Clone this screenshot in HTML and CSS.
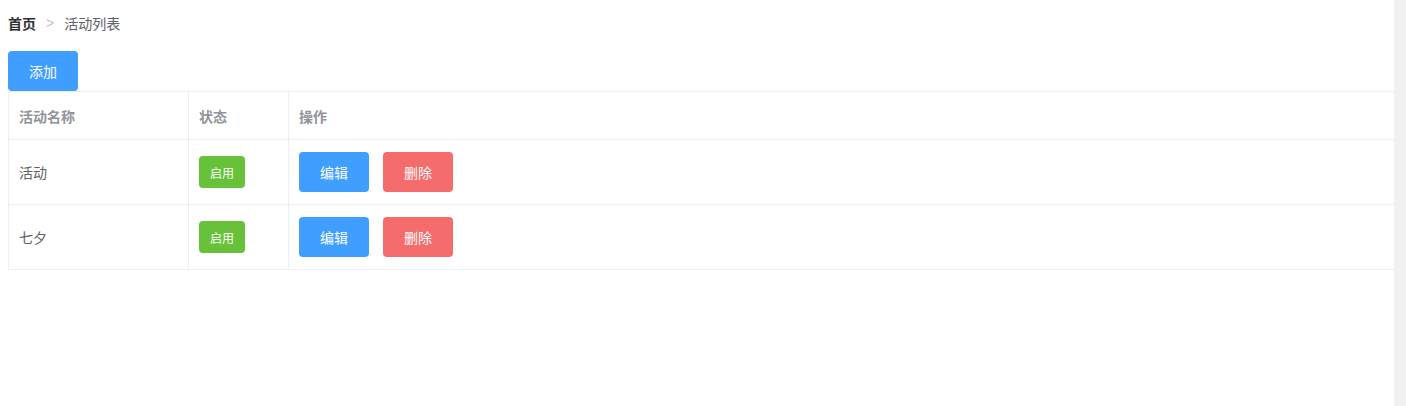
FILE: index.html
```html
<!DOCTYPE html>
<html lang="zh-CN">
<head>
<meta charset="utf-8">
<title>活动列表</title>
<link rel="stylesheet" href="styles.css">
</head>
<body>
<div class="page">
  <main class="main">
    <nav class="breadcrumb">
      <span class="crumb crumb-home">首页</span>
      <span class="crumb-sep">&gt;</span>
      <span class="crumb">活动列表</span>
    </nav>
    <div class="toolbar">
      <button class="btn btn-primary">添加</button>
    </div>
    <table class="table">
      <colgroup>
        <col class="col-name">
        <col class="col-status">
        <col>
      </colgroup>
      <thead>
        <tr>
          <th>活动名称</th>
          <th>状态</th>
          <th>操作</th>
        </tr>
      </thead>
      <tbody>
        <tr>
          <td>活动</td>
          <td><span class="tag">启用</span></td>
          <td><div class="actions"><button class="btn btn-primary">编辑</button><button class="btn btn-danger">删除</button></div></td>
        </tr>
        <tr>
          <td>七夕</td>
          <td><span class="tag">启用</span></td>
          <td><div class="actions"><button class="btn btn-primary">编辑</button><button class="btn btn-danger">删除</button></div></td>
        </tr>
      </tbody>
    </table>
  </main>
  <div class="scrollbar"></div>
</div>
</body>
</html>
```

FILE: styles.css
```css
* { box-sizing: border-box; }
html, body { margin: 0; padding: 0; background: #fff; }
body {
  font-family: "Noto Sans CJK SC", "Noto Sans", sans-serif;
  font-size: 14px;
  color: #606266;
}
.page {
  display: flex;
  height: 406px;
  overflow: hidden;
}
.main {
  flex: 1;
  min-width: 0;
  padding: 16px 0 0 8px;
}
.scrollbar {
  width: 12px;
  flex: none;
  background: #f1f1f1;
}
.breadcrumb {
  display: flex;
  align-items: center;
  height: 14px;
  line-height: 14px;
  font-size: 14px;
}
.crumb { color: #606266; }
.crumb-home { color: #303133; font-weight: 700; }
.crumb-sep {
  color: #c0c4cc;
  margin: 0 10px 0 10px;
  font-family: "Liberation Sans", sans-serif;
}
.toolbar {
  margin-top: 21px;
  display: flex;
}
.btn {
  display: inline-flex;
  align-items: center;
  justify-content: center;
  width: 70px;
  height: 40px;
  border: none;
  border-radius: 4px;
  font-family: inherit;
  font-size: 14px;
  color: #fff;
  padding: 0 0 1px;
  cursor: pointer;
}
.btn-primary { background: #409eff; }
.btn-danger { background: #f56c6c; }
.table {
  width: 100%;
  border-collapse: collapse;
  table-layout: fixed;
  border-top: 1px solid #ebeef5;
}
.col-name { width: 180px; }
.col-status { width: 100px; }
.table th, .table td {
  border-left: 1px solid #ebeef5;
  border-bottom: 1px solid #ebeef5;
  text-align: left;
  vertical-align: middle;
  padding: 0 10px;
  font-size: 14px;
}
.table th {
  height: 48px;
  color: #909399;
  font-weight: 700;
}
.table td {
  height: 65px;
  color: #606266;
}
.tag {
  display: inline-flex;
  align-items: center;
  justify-content: center;
  width: 46px;
  height: 32px;
  border-radius: 4px;
  background: #67c23a;
  color: #fff;
  font-size: 12px;
  vertical-align: middle;
}
.actions {
  display: flex;
  gap: 14px;
}
```
